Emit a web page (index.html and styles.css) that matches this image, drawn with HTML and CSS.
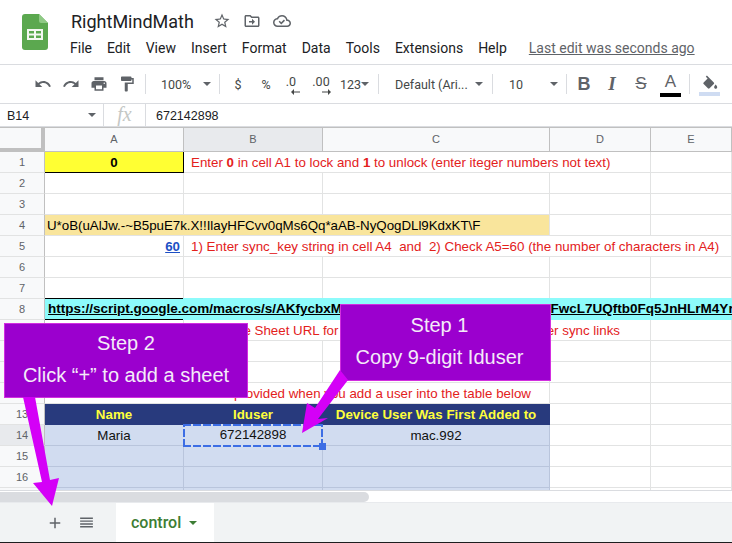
FILE: index.html
```html
<!DOCTYPE html>
<html lang="en">

<head>
    <meta charset="UTF-8">
    <title>RightMindMath</title>
    <link rel="stylesheet" href="styles.css">
</head>

<body>
    <div class="top">
        <svg class="logo" viewBox="0 0 26 36">
            <path d="M3 0H17L26 9V33a3 3 0 0 1-3 3H3a3 3 0 0 1-3-3V3a3 3 0 0 1 3-3z" fill="#5ba84f"/>
            <path d="M17 0L26 9H19a2 2 0 0 1-2-2z" fill="#8fca85"/>
            <path d="M5 15H21V26H5zM7 17V19.5H12V17zM14 17V19.5H19V17zM7 21.5V24H12V21.5zM14 21.5V24H19V21.5z" fill="#f4f8f2" fill-rule="evenodd"/>
        </svg>
        <div class="top-right">
            <div class="title-row">
                <span class="doc-title">RightMindMath</span>
                <svg class="title-icon star" viewBox="0 0 24 24"><path d="M22 9.24l-7.19-.62L12 2 9.19 8.63 2 9.24l5.46 4.73L5.82 21 12 17.27 18.18 21l-1.63-7.03L22 9.24zM12 15.4l-3.76 2.27 1-4.28-3.32-2.88 4.38-.38L12 6.1l1.71 4.04 4.38.38-3.32 2.88 1 4.28L12 15.4z"/></svg>
                <svg class="title-icon" viewBox="0 0 24 24"><path d="M20 6h-8l-2-2H4c-1.1 0-2 .9-2 2v12c0 1.1.9 2 2 2h16c1.1 0 2-.9 2-2V8c0-1.1-.9-2-2-2zm0 12H4V6h5.17l2 2H20v10zm-8-4H8v-2h4V9l4 4-4 4v-3z"/></svg>
                <svg class="title-icon" viewBox="0 0 24 24"><path d="M19.35 10.04C18.67 6.59 15.64 4 12 4 9.11 4 6.6 5.64 5.35 8.04 2.34 8.36 0 10.91 0 14c0 3.31 2.69 6 6 6h13c2.76 0 5-2.24 5-5 0-2.64-2.05-4.78-4.65-4.96zM19 18H6c-2.21 0-4-1.79-4-4 0-2.05 1.53-3.76 3.56-3.97l1.07-.11.5-.95C8.08 7.14 9.94 6 12 6c2.62 0 4.88 1.86 5.39 4.43l.3 1.5 1.53.11c1.56.1 2.78 1.41 2.78 2.96 0 1.65-1.35 3-3 3zm-8-1.5l-3.5-3.5 1.41-1.41L11 13.67l3.59-3.59L16 11.5z"/></svg>
            </div>
            <div class="menu-row">
                <span class="menu-item">File</span>
                <span class="menu-item">Edit</span>
                <span class="menu-item">View</span>
                <span class="menu-item">Insert</span>
                <span class="menu-item">Format</span>
                <span class="menu-item">Data</span>
                <span class="menu-item">Tools</span>
                <span class="menu-item">Extensions</span>
                <span class="menu-item">Help</span>
                <span class="last-edit">Last edit was seconds ago</span>
            </div>
        </div>
    </div>

    <div class="toolbar">
        <svg class="tool-icon" viewBox="0 0 24 24"><path d="M12.5 8c-2.65 0-5.05.99-6.9 2.6L2 7v9h9l-3.62-3.62c1.39-1.16 3.16-1.88 5.12-1.88 3.54 0 6.55 2.31 7.6 5.5l2.37-.78C21.08 11.03 17.15 8 12.5 8z"/></svg>
        <svg class="tool-icon" viewBox="0 0 24 24"><path d="M18.4 10.6C16.55 8.99 14.15 8 11.5 8c-4.65 0-8.58 3.03-9.96 7.22L3.9 16c1.05-3.19 4.05-5.5 7.6-5.5 1.95 0 3.73.72 5.12 1.88L13 16h9V7l-3.6 3.6z"/></svg>
        <svg class="tool-icon" viewBox="0 0 24 24"><path d="M19 8H5c-1.66 0-3 1.34-3 3v6h4v4h12v-4h4v-6c0-1.66-1.34-3-3-3zm-3 11H8v-5h8v5zm3-7c-.55 0-1-.45-1-1s.45-1 1-1 1 .45 1 1-.45 1-1 1zm-1-9H6v4h12V3z"/></svg>
        <svg class="tool-icon" viewBox="0 0 24 24"><path d="M18 4V3c0-.55-.45-1-1-1H5c-.55 0-1 .45-1 1v4c0 .55.45 1 1 1h12c.55 0 1-.45 1-1V6h1v4H9v11c0 .55.45 1 1 1h2c.55 0 1-.45 1-1v-9h8V4h-3z"/></svg>
        <span class="sep sep-a"></span>
        <span class="tool-text w-zoom">100%</span>
        <span class="caret"></span>
        <span class="sep sep-b"></span>
        <span class="tool-text w-cur w-dollar">$</span>
        <span class="tool-text w-cur">%</span>
        <span class="tool-text w-dec"><span class="dec-label">.0</span><svg class="dec-arrow" viewBox="0 0 9 6"><path d="M9 2.5H3V0L0 3l3 3V3.5h6z"/></svg></span>
        <span class="tool-text w-dec2"><span class="dec-label">.00</span><svg class="dec-arrow" viewBox="0 0 9 6"><path d="M0 2.5h6V0l3 3-3 3V3.5H0z"/></svg></span>
        <span class="tool-text w-num">123</span>
        <span class="caret"></span>
        <span class="sep sep-c"></span>
        <span class="tool-text w-font">Default (Ari...</span>
        <span class="caret"></span>
        <span class="sep sep-d"></span>
        <span class="tool-text w-size">10</span>
        <span class="caret"></span>
        <span class="sep sep-e"></span>
        <span class="fmt fmt-b">B</span>
        <span class="fmt fmt-i">I</span>
        <span class="fmt fmt-s">S</span>
        <span class="fmt fmt-a">A</span>
        <span class="sep sep-f"></span>
        <span class="fill">
            <svg class="fill-icon" viewBox="0 0 22 18"><path d="M16.56 8.94L7.62 0 6.21 1.41l2.38 2.38-5.15 5.15c-.59.59-.59 1.54 0 2.12l5.5 5.5c.29.29.68.44 1.06.44s.77-.15 1.06-.44l5.5-5.5c.59-.58.59-1.53 0-2.12zM19 11.5s-2 2.17-2 3.5c0 1.1.9 2 2 2s2-.9 2-2c0-1.33-2-3.5-2-3.5z"/></svg>
            <span class="fill-bar"></span>
        </span>
    </div>

    <div class="formula-bar">
        <span class="name-box">B14</span>
        <span class="caret caret-name"></span>
        <span class="fx">fx</span>
        <span class="formula">672142898</span>
    </div>

    <div class="sheet">
        <div class="row col-heads">
            <div class="corner"></div>
            <div class="col-head">A</div>
            <div class="col-head selected">B</div>
            <div class="col-head">C</div>
            <div class="col-head">D</div>
            <div class="col-head">E</div>
        </div>
        <div class="row">
            <div class="rh">1</div>
            <div class="cell lock-cell">0</div>
            <div class="cell note span-3">Enter <b>0</b> in cell A1 to lock and <b>1</b> to unlock (enter iteger numbers not text)</div>
            <div class="cell"></div>
        </div>
        <div class="row">
            <div class="rh">2</div>
            <div class="cell"></div><div class="cell"></div><div class="cell"></div><div class="cell"></div><div class="cell"></div>
        </div>
        <div class="row">
            <div class="rh">3</div>
            <div class="cell"></div><div class="cell"></div><div class="cell"></div><div class="cell"></div><div class="cell"></div>
        </div>
        <div class="row">
            <div class="rh">4</div>
            <div class="cell key-cell span-3">U*oB(uAlJw.-~B5puE7k.X!!IlayHFCvv0qMs6Qq*aAB-NyQogDLl9KdxKT\F</div>
            <div class="cell"></div>
            <div class="cell"></div>
        </div>
        <div class="row">
            <div class="rh">5</div>
            <div class="cell count-cell">60</div>
            <div class="cell note sync-note span-4">1) Enter sync_key string in cell A4  and  2) Check A5=60 (the number of characters in A4)</div>
        </div>
        <div class="row">
            <div class="rh">6</div>
            <div class="cell"></div><div class="cell"></div><div class="cell"></div><div class="cell"></div><div class="cell"></div>
        </div>
        <div class="row">
            <div class="rh">7</div>
            <div class="cell"></div><div class="cell"></div><div class="cell"></div><div class="cell"></div><div class="cell"></div>
        </div>
        <div class="row">
            <div class="rh">8</div>
            <div class="cell url-cell span-5">https://script.google.com/macros/s/AKfycbxMrn5_nR6lNqbwJKZpqnRkE1e30xFwcL7UQftb0Fq5JnHLrM4Yr</div>
        </div>
        <div class="row">
            <div class="rh">9</div>
            <div class="cell"></div>
            <div class="cell note paste-note span-3">the Sheet URL for this spreadsheet, and use it for other sync links</div>
            <div class="cell"></div>
        </div>
        <div class="row">
            <div class="rh">10</div>
            <div class="cell"></div><div class="cell"></div><div class="cell"></div><div class="cell"></div><div class="cell"></div>
        </div>
        <div class="row">
            <div class="rh">11</div>
            <div class="cell"></div><div class="cell"></div><div class="cell"></div><div class="cell"></div><div class="cell"></div>
        </div>
        <div class="row">
            <div class="rh">12</div>
            <div class="cell note provided-note span-3">provided when you add a user into the table below</div>
            <div class="cell"></div>
            <div class="cell"></div>
        </div>
        <div class="row">
            <div class="rh">13</div>
            <div class="cell head-cell">Name</div>
            <div class="cell head-cell">Iduser</div>
            <div class="cell head-cell">Device User Was First Added to</div>
            <div class="cell"></div>
            <div class="cell"></div>
        </div>
        <div class="row">
            <div class="rh selected">14</div>
            <div class="cell body-cell">Maria</div>
            <div class="cell body-cell active-cell">672142898<span class="handle"></span></div>
            <div class="cell body-cell">mac.992</div>
            <div class="cell"></div>
            <div class="cell"></div>
        </div>
        <div class="row">
            <div class="rh">15</div>
            <div class="cell body-cell"></div><div class="cell body-cell"></div><div class="cell body-cell"></div><div class="cell"></div><div class="cell"></div>
        </div>
        <div class="row">
            <div class="rh">16</div>
            <div class="cell body-cell"></div><div class="cell body-cell"></div><div class="cell body-cell"></div><div class="cell"></div><div class="cell"></div>
        </div>
        <div class="row row-cut">
            <div class="rh"></div>
            <div class="cell body-cell"></div><div class="cell body-cell"></div><div class="cell body-cell"></div><div class="cell"></div><div class="cell"></div>
        </div>
    </div>

    <div class="scrollbar"><div class="thumb"></div></div>

    <div class="tabs">
        <svg class="tab-icon add-icon" viewBox="0 0 24 24"><path d="M19 13h-6v6h-2v-6H5v-2h6V5h2v6h6v2z"/></svg>
        <svg class="tab-icon list-icon" viewBox="0 0 24 24"><path d="M3 5h18v2H3zM3 9h18v2H3zM3 13h18v2H3zM3 17h18v2H3z"/></svg>
        <div class="tab">
            <span>control</span>
            <span class="caret caret-tab"></span>
        </div>
    </div>

    <!-- annotations pasted over the screenshot -->
    <div class="callout step-one">
        <span>Step 1</span>
        <span>Copy 9-digit Iduser</span>
    </div>
    <div class="callout step-two">
        <span>Step 2</span>
        <span>Click “+” to add a sheet</span>
    </div>
    <svg class="arrows" viewBox="0 0 732 543">
        <polygon points="340,370 348,380 318,419 328,418 302,433 307,403 315,408"/>
        <polygon points="23,397 35,397 50,480 59,478 52,506 33,483 42,482"/>
    </svg>
</body>

</html>
```

FILE: styles.css
```css
* {
    margin: 0;
    padding: 0;
    box-sizing: border-box;
}

body {
    position: relative;
    width: 732px;
    height: 543px;
    overflow: hidden;
    background: #fff;
    font-family: "Liberation Sans", Arial, sans-serif;
    color: #000;
}

/* title + menu */
.top {
    display: flex;
    height: 64px;
    padding: 14px 0 0 22px;
}

.logo {
    width: 26px;
    height: 36px;
    flex: none;
}

.top-right {
    margin: -4px 0 0 22px;
}

.title-row {
    display: flex;
    align-items: center;
    height: 22px;
    padding-left: 1px;
    font-family: Roboto, sans-serif;
}

.doc-title {
    font-size: 18px;
    color: #202124;
    width: 142px;
}

.title-icon {
    width: 18px;
    height: 18px;
    margin-right: 12px;
    fill: #5f6368;
}

.menu-row {
    display: flex;
    align-items: center;
    height: 24px;
    margin-top: 4px;
    font-family: Roboto, sans-serif;
    font-size: 14px;
    color: #202124;
}

.menu-item {
    margin-right: 15px;
    white-space: nowrap;
}

.last-edit {
    margin-left: 7px;
    color: #5f6368;
    text-decoration: underline;
    white-space: nowrap;
}

/* toolbar */
.toolbar {
    display: flex;
    align-items: center;
    height: 40px;
    padding-left: 34px;
    border-top: 1px solid #dadce0;
    border-bottom: 1px solid #dadce0;
    font-family: Roboto, sans-serif;
    font-size: 12.5px;
    color: #444746;
}

.tool-icon {
    width: 18px;
    height: 18px;
    margin-right: 10px;
    fill: #5f6368;
}

.sep {
    width: 1px;
    height: 20px;
    background: #dadce0;
    flex: none;
}

.sep-a { margin-left: -1px; }
.sep-b { margin-left: 8px; }
.sep-c { margin-left: 9px; }
.sep-d { margin-left: 9px; }
.sep-e { margin-left: 8px; }
.sep-f { margin-left: 8px; }

.tool-text {
    position: relative;
    flex: none;
    text-align: center;
    white-space: nowrap;
}

.w-zoom { width: 57px; text-align: left; padding-left: 15px; }
.w-cur { width: 28px; }
.w-dollar { margin-left: 4px; }
.w-dec { width: 22px; }
.w-dec2 { width: 38px; }
.w-num { width: 21px; }
.w-font { width: 96px; text-align: left; padding-left: 16px; }
.w-size { width: 57px; text-align: left; padding-left: 16px; }

.w-dec, .w-dec2 {
    height: 20px;
}

.dec-label {
    display: block;
    line-height: 16px;
}

.dec-arrow {
    position: absolute;
    left: 11px;
    top: 15px;
    width: 9px;
    height: 6px;
    fill: #444746;
}

.w-dec2 .dec-arrow {
    left: 20px;
}

.caret {
    flex: none;
    width: 0;
    height: 0;
    border-left: 4px solid transparent;
    border-right: 4px solid transparent;
    border-top: 4px solid #5f6368;
}

.fmt {
    flex: none;
    width: 28px;
    text-align: center;
    font-family: "Liberation Sans", sans-serif;
    font-size: 17px;
    color: #5f6368;
}

.fmt-b { margin-left: 3px; font-weight: bold; font-size: 18px; }
.fmt-i { font-style: italic; font-weight: bold; font-family: "Liberation Serif", serif; font-size: 19px; }
.fmt-s { margin-left: 1px; text-decoration: line-through; }

.fmt-a {
    height: 26px;
    padding-top: 1px;
    line-height: 19px;
    border-bottom: 4px solid #000;
    width: 21px;
    margin-left: 5px;
}

.fill {
    display: flex;
    flex-direction: column;
    width: 21px;
    margin: 2px 0 0 9px;
}

.fill-icon {
    width: 17px;
    height: 15px;
    margin: 0 0 2px 2px;
    fill: #5f6368;
}

.fill-bar {
    height: 4px;
    background: #cfdcf2;
}

/* formula bar */
.formula-bar {
    display: flex;
    align-items: center;
    height: 23px;
    border-bottom: 1px solid #dadce0;
    font-size: 12.5px;
    color: #202124;
}

.name-box {
    width: 88px;
    padding: 1px 0 0 7px;
}

.caret-name {
    margin-right: 7px;
}

.fx {
    width: 43px;
    height: 100%;
    line-height: 21px;
    border-left: 1px solid #dadce0;
    border-right: 1px solid #dadce0;
    text-align: center;
    font-family: "Liberation Serif", serif;
    font-style: italic;
    font-size: 20px;
    color: #c4c7c5;
}

.formula {
    padding: 1px 0 0 10px;
}

/* grid */
.sheet {
    height: 363px;
    overflow: hidden;
    font-size: 13.33px;
}

.row {
    display: grid;
    grid-template-columns: 45px 139px 139px 227px 101px 81px;
    height: 21px;
}

.col-heads {
    height: 25px;
    border-top: 1px solid #c0c0c0;
}

.corner {
    background: #f8f9fa;
    border-right: 4px solid #c0c0c0;
    border-bottom: 4px solid #c0c0c0;
}

.col-head {
    background: #f8f9fa;
    border-right: 1px solid #c0c0c0;
    border-bottom: 1px solid #c0c0c0;
    font-size: 11px;
    line-height: 23px;
    text-align: center;
    color: #5f6368;
}

.col-head.selected, .rh.selected {
    background: #e8eaed;
}

.rh {
    background: #f8f9fa;
    border-right: 1px solid #c0c0c0;
    border-bottom: 1px solid #e2e3e3;
    font-size: 11px;
    line-height: 20px;
    text-align: center;
    color: #5f6368;
}

.cell {
    min-width: 0;
    line-height: 22px;
    border-right: 1px solid #e2e3e3;
    border-bottom: 1px solid #e2e3e3;
    white-space: pre;
    overflow: hidden;
}

.span-3 { grid-column: span 3; }
.span-4 { grid-column: span 4; }
.span-5 { grid-column: span 5; }

.note {
    padding-left: 7px;
    color: #e3211c;
}

.sync-note {
    font-size: 13.38px;
}

.lock-cell {
    background: #ffff33;
    border-right-color: #000;
    border-bottom-color: #000;
    font-weight: bold;
    text-align: center;
}

.key-cell {
    padding-left: 2px;
    background: #f9e59c;
    letter-spacing: -0.03px;
}

.count-cell {
    padding-right: 3px;
    color: #1c4fc4;
    font-weight: bold;
    text-align: right;
    text-decoration: underline;
}

/* only column A of the merged link row has the black rules */
.url-cell {
    margin-top: -1px;
    padding-left: 3px;
    background:
        linear-gradient(#000, #000) 0 0 / 138px 1px no-repeat,
        linear-gradient(#000, #000) 0 100% / 138px 1px no-repeat,
        #8dfbfb;
    border: none;
    line-height: 22px;
    font-size: 13.5px;
    font-weight: bold;
    text-decoration: underline;
}

.paste-note {
    padding-right: 30px;
    text-align: right;
}

.provided-note {
    padding-right: 18px;
    text-align: right;
}

.head-cell {
    background: #283a7d;
    border-color: #283a7d;
    color: #ffff3b;
    font-weight: bold;
    text-align: center;
}

.body-cell {
    background: #d1dcf0;
    border-color: #b9c5dc;
    color: #111;
    text-align: center;
}

.active-cell {
    position: relative;
    overflow: visible;
    margin: -1px 0 -1px -1px;
    border: none;
    background:
        repeating-linear-gradient(90deg, #3c6de4 0 8px, transparent 8px 10px) 0 0 / 100% 2px no-repeat,
        repeating-linear-gradient(90deg, #3c6de4 0 8px, transparent 8px 10px) 0 100% / 100% 2px no-repeat,
        repeating-linear-gradient(0deg, #3c6de4 0 8px, transparent 8px 10px) 0 0 / 2px 100% no-repeat,
        repeating-linear-gradient(0deg, #3c6de4 0 8px, transparent 8px 10px) 100% 0 / 2px 100% no-repeat,
        #d1dcf0;
    line-height: 22px;
}

.handle {
    position: absolute;
    right: -3px;
    bottom: -3px;
    width: 7px;
    height: 7px;
    background: #3c6de4;
}

.row-cut {
    height: 4px;
}

/* scrollbar + tabs */
.scrollbar {
    height: 12px;
    padding-top: 1px;
    border-top: 1px solid #dadce0;
    background: #fff;
}

.thumb {
    width: 369px;
    height: 10px;
    border-radius: 0 5px 5px 0;
    background: #dadce0;
}

.tabs {
    display: flex;
    align-items: stretch;
    height: 41px;
    background: #f1f3f4;
    border-top: 1px solid #e8eaed;
    border-bottom: 1px solid #1d1d1f;
}

.tab-icon {
    align-self: center;
    fill: #5f6368;
}

.add-icon {
    width: 18px;
    height: 18px;
    margin-left: 46px;
}

.list-icon {
    width: 17px;
    height: 17px;
    margin-left: 14px;
}

.tab {
    display: flex;
    align-items: center;
    width: 98px;
    margin-left: 21px;
    padding-left: 15px;
    background: #fff;
    font-family: Roboto, sans-serif;
    font-size: 16px;
    font-weight: 500;
    color: #3d7d34;
}

.caret-tab {
    margin-left: 8px;
    border-top-color: #3d7d34;
}

/* callouts and arrows */
.callout {
    position: absolute;
    display: flex;
    flex-direction: column;
    align-items: center;
    justify-content: center;
    gap: 11px;
    background: #9b00ce;
    border: 1px solid #d22ee0;
    font-size: 20px;
    line-height: 21px;
    color: #f4ebf8;
}

.step-one {
    left: 340px;
    top: 304px;
    width: 211px;
    height: 77px;
    padding: 0 12px 2px 0;
}

.step-two {
    left: 4px;
    top: 323px;
    width: 244px;
    height: 75px;
    padding-bottom: 2px;
}

.arrows {
    position: absolute;
    left: 0;
    top: 0;
    width: 732px;
    height: 543px;
    fill: #d400f7;
}
```
